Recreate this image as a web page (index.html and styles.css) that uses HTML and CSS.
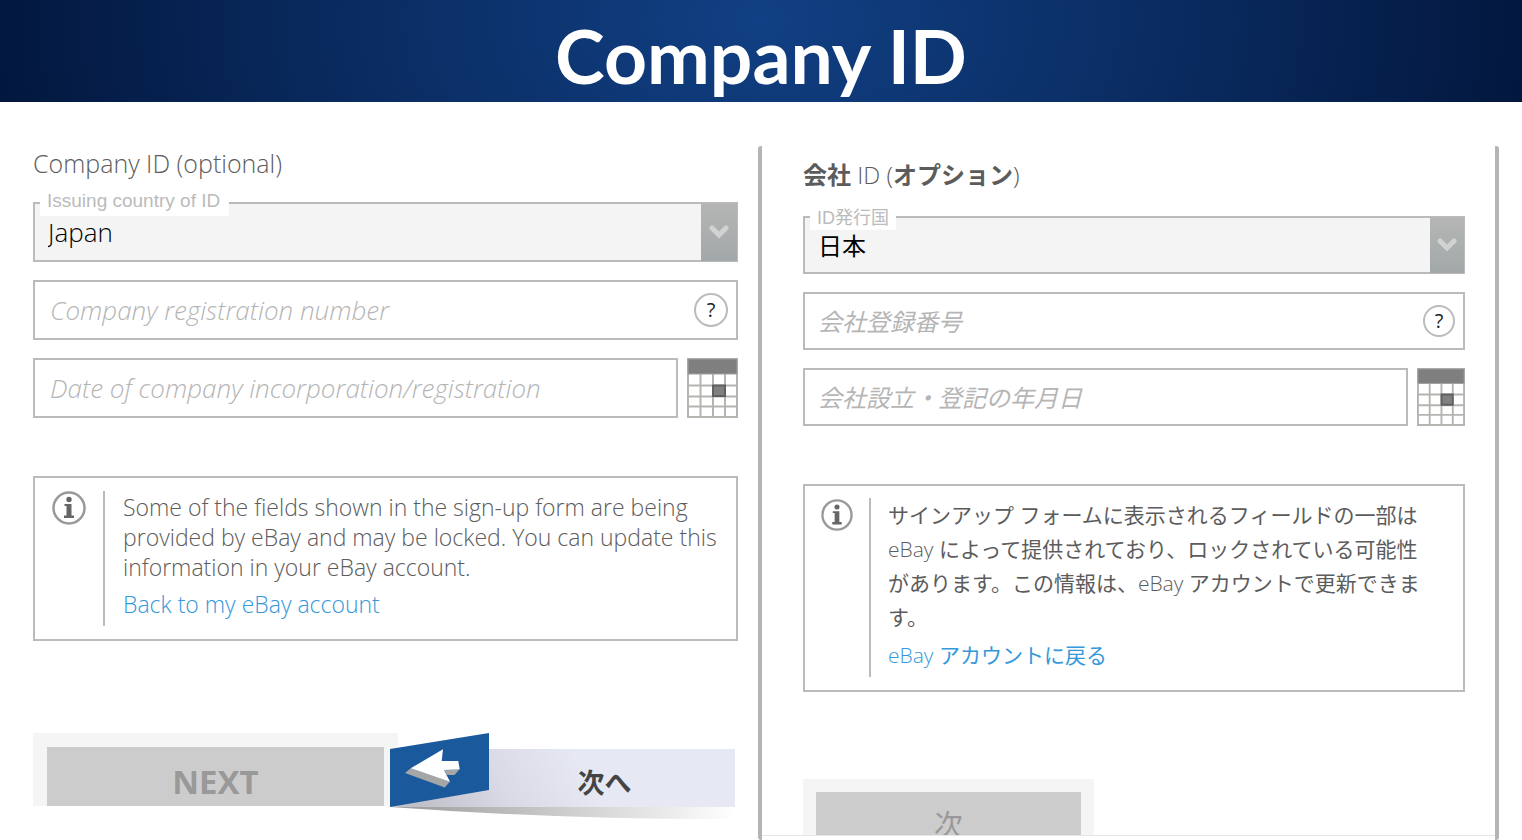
FILE: index.html
```html
<!DOCTYPE html>
<html lang="en">
<head>
    <meta charset="UTF-8">
    <meta name="viewport" content="width=device-width, initial-scale=1.0">
    <title>Company ID</title>
    <link rel="stylesheet" href="styles.css">
</head>
<body>
    <svg class="defs" aria-hidden="true">
        <symbol id="chevron" viewBox="0 0 20 14">
            <path d="M3 3l7 7 7-7" fill="none" stroke="#d2d2d2" stroke-width="5" stroke-linecap="round" />
        </symbol>
        <symbol id="calendar" viewBox="0 0 51 60" preserveAspectRatio="none">
            <path d="M0 0h51v60H0z" fill="#fff" />
            <path d="M1 1h49v58H1zM1 27.500h49M1 38.500h49M1 48.500h49M13.500 16v43M26 16v43M38 16v43" fill="none" stroke="#b4b4b0" stroke-width="2" />
            <path d="M1 1h49v15H1z" fill="#7f7f7f" stroke="#a0a09e" />
            <path d="M26 27.500h12v10.500H26z" fill="#808080" stroke="#606060" stroke-width="2" />
        </symbol>
        <symbol id="info" viewBox="0 0 34 34">
            <circle cx="17" cy="17" r="15.500" fill="none" stroke="#999" stroke-width="2.500" />
            <circle cx="17" cy="8.500" r="2.700" fill="#666" />
            <path d="M12.500 13h7v11.500h2.500V27h-10v-2.500h2.500V15h-2z" fill="#666" />
        </symbol>
    </svg>

    <header>
        <h1>Company ID</h1>
    </header>

    <main>
        <section class="panel">
            <h2>Company ID (optional)</h2>
            <div class="field">
                <label for="country" class="floating">Issuing country of ID</label>
                <select id="country">
                    <option>Japan</option>
                </select>
                <span class="arrow"><svg><use href="#chevron" /></svg></span>
            </div>
            <div class="field">
                <input id="number" type="text" placeholder="Company registration number" aria-label="Company registration number">
                <button type="button" class="help">?</button>
            </div>
            <div class="field date">
                <input id="date" type="text" placeholder="Date of company incorporation/registration" aria-label="Date of company incorporation/registration">
                <button type="button" class="calendar" aria-label="Calendar"><svg><use href="#calendar" /></svg></button>
            </div>
            <div class="notice">
                <svg class="info"><use href="#info" /></svg>
                <div class="notice-text">
                    <p>Some of the fields shown in the sign-up form are being provided by eBay and may be locked. You can update this information in your eBay account.</p>
                    <a href="#">Back to my eBay account</a>
                </div>
            </div>
            <div class="actions">
                <div class="next">
                    <button type="button">NEXT</button>
                </div>
                <div class="ribbon">
                    <svg viewBox="0 0 345 88" preserveAspectRatio="none" aria-hidden="true">
                        <defs>
                            <linearGradient id="band" gradientUnits="userSpaceOnUse" x1="40" y1="90" x2="180" y2="10">
                                <stop offset="0" stop-color="#bfc0c8" />
                                <stop offset=".5" stop-color="#d9dae6" />
                                <stop offset="1" stop-color="#e6e8f4" />
                            </linearGradient>
                            <linearGradient id="shade">
                                <stop offset="0" stop-color="#999" />
                                <stop offset=".5" stop-color="#ccc" />
                                <stop offset="1" stop-color="#fff" />
                            </linearGradient>
                        </defs>
                        <path d="M0 74h345v12Q180 87 0 74z" fill="url(#shade)" />
                        <path d="M0 74L99 16h246v58z" fill="url(#band)" />
                        <path d="M0 16L99 0v57L0 74z" fill="#1a5a9c" />
                        <path d="M20.700 35.300L15 40l39.700 14.500 5.300-6zM54 37l3 5h7.500l5.200-6z" fill="#a5a7a6" />
                        <path d="M20.700 35.300L53 16.300 51.700 28h16.600l1.400 8.300L54 37l6 11.700z" fill="#fff" />
                    </svg>
                    <span lang="ja">次へ</span>
                </div>
            </div>
        </section>

        <section class="panel translated" lang="ja">
            <div class="sheet">
                <h2><b>会社</b> ID (<b>オプション</b>)</h2>
                <div class="field">
                    <label for="country-ja" class="floating">ID発行国</label>
                    <select id="country-ja">
                        <option>日本</option>
                    </select>
                    <span class="arrow"><svg><use href="#chevron" /></svg></span>
                </div>
                <div class="field">
                    <input id="number-ja" type="text" placeholder="会社登録番号" aria-label="会社登録番号">
                    <button type="button" class="help">?</button>
                </div>
                <div class="field date">
                    <input id="date-ja" type="text" placeholder="会社設立・登記の年月日" aria-label="会社設立・登記の年月日">
                    <button type="button" class="calendar" aria-label="カレンダー"><svg><use href="#calendar" /></svg></button>
                </div>
                <div class="notice">
                    <svg class="info"><use href="#info" /></svg>
                    <div class="notice-text">
                        <p>サインアップ フォームに表示されるフィールドの一部は <span class="latin">eBay</span> によって提供されており、ロックされている可能性があります。この情報は、<span class="latin">eBay</span> アカウントで更新できます。</p>
                        <a href="#"><span class="latin">eBay</span> アカウントに戻る</a>
                    </div>
                </div>
                <div class="next">
                    <button type="button">次</button>
                </div>
            </div>
        </section>
    </main>
</body>
</html>
```
FILE: styles.css
```css
* {
    box-sizing: border-box;
}
body {
    margin: 0;
    background: #fff;
    color: #5c5c5c;
    font-family: "Open Sans", "Noto Sans CJK JP", sans-serif;
    font-weight: 300;
}
.defs {
    display: none;
}
header {
    height: 102px;
    background: radial-gradient(ellipse 52% 500% at 50% 20%, #114084 0%, #0a2c62 50%, #02163c 100%);
    text-align: center;
}
h1 {
    margin: 0;
    color: #fff;
    font-family: Lato, sans-serif;
    font-size: 75px;
    font-weight: 700;
    line-height: 110px;
}
main {
    display: grid;
    grid-template-columns: 705fr 741fr;
    gap: 20px;
    padding: 44px 23px 0 33px;
}
h2 {
    margin: 0 0 22px;
    font-size: 25px;
    font-weight: 300;
    line-height: 34px;
}
h2 b {
    font-weight: 700;
}
.field {
    position: relative;
    display: flex;
    gap: 9px;
    height: 60px;
    margin-bottom: 18px;
}
input, select {
    flex: 1;
    min-width: 0;
    padding: 0 15px;
    border: 2px solid #bbb;
    border-radius: 0;
    background: #fff;
    font-family: inherit;
    font-size: 26px;
    font-weight: 300;
}
select {
    appearance: none;
    padding: 0 13px;
    background: #f4f4f4;
    color: #000;
}
input::placeholder {
    color: #b5b5b5;
    font-style: italic;
    opacity: 1;
}
.floating {
    position: absolute;
    top: -12px;
    left: 7px;
    padding: 0 9px 4px 7px;
    background: #fff;
    color: #bbb;
    font-family: "Liberation Sans", "Noto Sans CJK JP", sans-serif;
    font-size: 19px;
    font-weight: 400;
    line-height: 22px;
}
.arrow {
    position: absolute;
    top: 1px;
    right: 1px;
    bottom: 1px;
    display: flex;
    align-items: center;
    justify-content: center;
    width: 36px;
    background: linear-gradient(#b5b6b5, #a2a8a9);
    pointer-events: none;
}
.arrow svg {
    width: 20px;
    height: 14px;
}
.help {
    position: absolute;
    top: 13px;
    right: 10px;
    width: 34px;
    height: 34px;
    padding: 0;
    border: 2px solid #bbb;
    border-radius: 50%;
    background: #fff;
    color: #222;
    font-family: "Open Sans", sans-serif;
    font-size: 20px;
    font-weight: 400;
    line-height: 30px;
}
.calendar {
    width: 51px;
    padding: 0;
    border: none;
    background: none;
}
.calendar svg {
    display: block;
    width: 100%;
    height: 100%;
}
.notice {
    display: flex;
    gap: 16px;
    margin-top: 58px;
    padding: 13px 16px;
    border: 2px solid #bbb;
}
.info {
    flex: none;
    width: 36px;
    height: 34px;
}
.notice-text {
    padding: 1px 0 7px 18px;
    border-left: 2px solid #bbb;
    font-size: 23px;
    line-height: 30px;
}
.notice-text p {
    margin: 0 0 7px;
}
a {
    color: #3498db;
    text-decoration: none;
}
.actions {
    display: flex;
    margin-top: 92px;
    padding-right: 3px;
}
/* the button runs past the bottom of its tray and is cut off there */
.next {
    flex: none;
    width: 365px;
    height: 73px;
    padding: 14px 14px 0;
    overflow: hidden;
    background: #f5f5f5;
}
.next button {
    width: 100%;
    height: 68px;
    border: none;
    background: #ccc;
    color: #999;
    font-family: inherit;
    font-size: 33px;
    font-weight: 700;
}
.ribbon {
    position: relative;
    flex: 1;
    height: 88px;
    margin-left: -8px;
    padding: 16px 0 0 84px;
    color: #444;
    font-family: "Noto Sans CJK JP", sans-serif;
    font-size: 27px;
    font-weight: 700;
    line-height: 66px;
    text-align: center;
}
.ribbon svg {
    position: absolute;
    inset: 0;
    width: 100%;
    height: 100%;
}
.ribbon span {
    position: relative;
}
.translated {
    padding-bottom: 4px;
    border: solid #b5b5b5;
    border-width: 0 4px;
    border-radius: 3px;
}
.sheet {
    padding: 12px 30px 0 41px;
    border-bottom: 1px solid #e6e6e6;
}
.translated h2 {
    margin-bottom: 24px;
    font-size: 24px;
}
.translated .field {
    height: 58px;
}
.translated input, .translated select {
    font-size: 24px;
    font-weight: 400;
}
.translated input {
    padding: 0 13px;
}
.translated .floating {
    top: -9px;
    padding: 0 7px 1px;
    font-size: 18px;
}
.translated .arrow {
    width: 34px;
}
.translated .calendar {
    width: 48px;
}
.translated .help {
    width: 32px;
    height: 32px;
    line-height: 28px;
}
.translated .info {
    width: 32px;
}
.translated .notice {
    padding-top: 12px;
}
.translated .notice-text {
    padding: 0 16px 5px 17px;
    font-size: 21px;
    font-weight: 400;
    line-height: 34px;
}
.translated .notice-text p {
    margin-bottom: 4px;
}
.latin {
    font-weight: 300;
}
.translated .next {
    width: 291px;
    height: 56px;
    margin-top: 87px;
    padding: 13px 13px 0;
}
.translated .next button {
    height: 62px;
    font-size: 29px;
    font-weight: 400;
}
```
